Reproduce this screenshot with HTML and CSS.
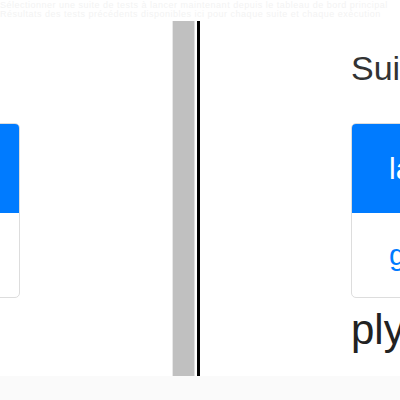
FILE: index.html
```html
<!DOCTYPE html>
<html>
<head>
<meta charset="utf-8">
<link rel="stylesheet" href="styles.css">
</head>
<body>
<div class="page">
  <div class="top">
    <div class="ghost">Sélectionner une suite de tests à lancer maintenant depuis le tableau de bord principal</div>
    <div class="ghost">Résultats des tests précédents disponibles ici pour chaque suite et chaque exécution</div>
  </div>
  <div class="main">
    <div class="pane left">
      <div class="card">
        <div class="card-head">lancer</div>
        <div class="card-body">go</div>
      </div>
    </div>
    <div class="divider"></div>
    <div class="rule"></div>
    <div class="pane right">
      <h1 class="title">Suite de tests</h1>
      <div class="card">
        <div class="card-head">lancer</div>
        <div class="card-body">go</div>
      </div>
      <div class="big">plyr</div>
    </div>
  </div>
  <div class="bottom"></div>
</div>
</body>
</html>
```
FILE: styles.css
```css
html, body {
  margin: 0;
  padding: 0;
  background: #fff;
  font-family: "Liberation Sans", Arial, sans-serif;
}
.page {
  width: 400px;
  height: 400px;
  display: flex;
  flex-direction: column;
  overflow: hidden;
}
.top {
  height: 21px;
  overflow: hidden;
  padding-top: 1px;
  box-sizing: border-box;
}
.ghost {
  font-size: 9px;
  line-height: 9px;
  color: #f3f3f3;
  white-space: nowrap;
  letter-spacing: 0.5px;
}
.main {
  height: 355px;
  display: flex;
  flex-direction: row;
}
.pane {
  overflow: hidden;
}
.left {
  width: 173px;
  flex: none;
}
.left .card {
  margin-left: -200px;
  margin-top: 102px;
  width: 220px;
}
.divider {
  width: 21px;
  flex: none;
  background: #c0c0c0;
  box-shadow: -1px 0 0 #e8e8e8, 1px 0 0 #e0e0e0;
}
.rule {
  width: 3px;
  flex: none;
  margin-left: 3px;
  background: #000;
}
.right {
  flex: 1;
  padding: 28px 0 0 151px;
}
.title {
  margin: 0;
  font-size: 34px;
  font-weight: normal;
  line-height: 38px;
  color: #333;
  white-space: nowrap;
}
.right .card {
  margin-top: 36px;
  width: 220px;
}
.card {
  box-sizing: border-box;
  border: 1px solid #dddddd;
  border-radius: 5px;
  overflow: hidden;
  background: #fff;
}
.card-head {
  height: 89px;
  background: #007bff;
  color: #fff;
  font-size: 30px;
  display: flex;
  align-items: center;
  padding-left: 37px;
  white-space: nowrap;
}
.card-body {
  height: 84px;
  color: #007bff;
  font-size: 30px;
  display: flex;
  align-items: center;
  padding-left: 37px;
  white-space: nowrap;
}
.big {
  margin-top: 7px;
  font-size: 42px;
  line-height: 50px;
  color: #222;
  white-space: nowrap;
}
.bottom {
  flex: 1;
  background: #fafafa;
}
```
